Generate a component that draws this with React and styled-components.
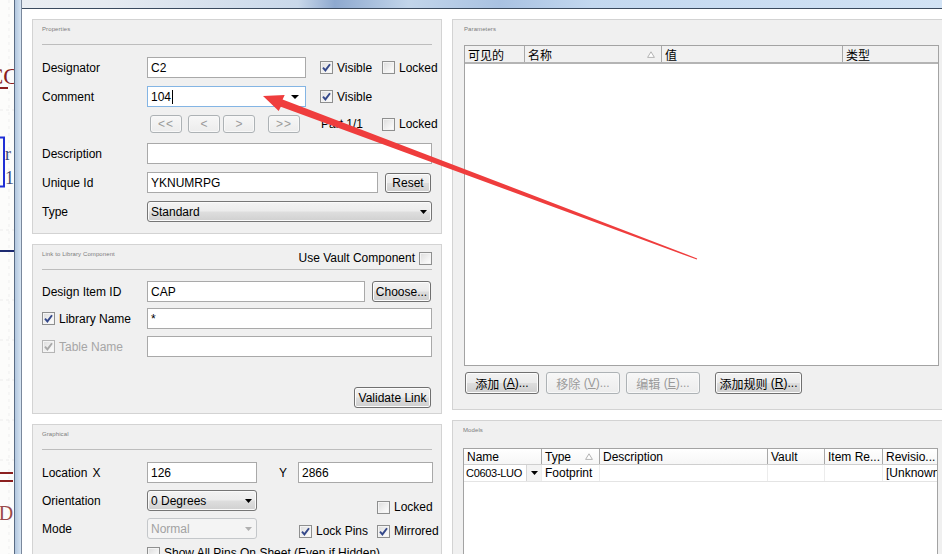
import React from "react";
import styled, { createGlobalStyle } from "styled-components";

const FONT = `"Liberation Sans", Arial, "Noto Sans CJK SC", sans-serif`;

const Global = createGlobalStyle`
  html, body { margin: 0; padding: 0; background: #fff; overflow: hidden; }
  body { font-family: ${FONT}; font-size: 12px; color: #000; }
  * { box-sizing: border-box; }
`;

const Screen = styled.div`
  position: relative;
  width: 942px;
  height: 554px;
  overflow: hidden;
  display: flex;
  background: #fff;
`;

const SchematicStrip = styled.div`
  flex: none;
  width: 14px;
  height: 100%;
  background: #fcfcfb;
`;

const FrameEdge = styled.div`
  flex: none;
  width: 8px;
  height: 100%;
  border-left: 1px solid #5a6c84;
  border-right: 1px solid #7a889c;
  background: linear-gradient(to right, #b2c7df, #d6e4f2);
`;

const WindowArea = styled.div`
  flex: 1;
  min-width: 0;
  display: flex;
  flex-direction: column;
`;

const TitleGlass = styled.div`
  flex: none;
  height: 9px;
  border-bottom: 1px solid #3a4a5e;
  background: linear-gradient(
    to right,
    #e9edf2 0%,
    #e6ebf1 9%,
    #c9d8ea 30%,
    #8ea9cf 34%,
    #c2d5ea 42%,
    #a9c2e2 52%,
    #c3d8ef 62%,
    #d2e3f5 100%
  );
`;

const ClientArea = styled.div`
  flex: 1;
  min-height: 0;
  display: flex;
  gap: 10px;
  padding: 10px 0 0 10px;
  background: #fff;
`;

const Column = styled.div`
  flex: none;
  width: ${(p) => p.$w}px;
  display: flex;
  flex-direction: column;
  gap: 10px;
`;

const GroupPanel = styled.section`
  flex: none;
  height: ${(p) => p.$h}px;
  border: 1px solid #d3d3d3;
  background: #f0f0f0;
  padding: 0 ${(p) => p.$pr ?? 9}px 0 ${(p) => p.$pl ?? 9}px;
  overflow: hidden;
`;

const PanelHead = styled.div`
  height: 25px;
  display: flex;
  justify-content: space-between;
  align-items: flex-start;
  padding-top: 6px;
  border-bottom: 1px solid ${(p) => (p.$rule ? "#bdbdbd" : "transparent")};
`;

const PanelTitle = styled.span`
  font-size: 6px;
  line-height: 7px;
  color: #7c7c7c;
  letter-spacing: 0.1px;
`;

const FormRow = styled.div`
  display: flex;
  align-items: center;
  height: ${(p) => p.$h ?? 21}px;
  margin-top: ${(p) => p.$mt ?? 8}px;
  justify-content: ${(p) => (p.$end ? "flex-end" : "flex-start")};
  padding-right: ${(p) => p.$pr ?? 0}px;
`;

const FieldLabel = styled.div`
  flex: none;
  width: ${(p) => p.$w ?? 105}px;
  display: flex;
  align-items: center;
  gap: 4px;
  white-space: nowrap;
  color: ${(p) => (p.$dim ? "#a6a6a6" : "#000")};
`;

const AxisTag = styled.span`
  margin-left: 1px;
`;

const TextField = styled.div`
  flex: none;
  width: ${(p) => p.$w}px;
  height: 21px;
  border: 1px solid ${(p) => (p.$focus ? "#84b5e4" : "#a9a9a9")};
  background: #fff;
  padding: 0 3px;
  display: flex;
  align-items: center;
  white-space: nowrap;
  overflow: hidden;
`;

const Caret = styled.span`
  display: inline-block;
  width: 1px;
  height: 14px;
  background: #000;
  margin-left: 1px;
`;

const ArrowSlot = styled.span`
  margin-left: auto;
  display: flex;
  align-items: center;
  padding-right: ${(p) => p.$pr ?? 3}px;
`;

const DropList = styled.div`
  flex: none;
  width: ${(p) => p.$w}px;
  height: 21px;
  border: 1px solid ${(p) => (p.$off ? "#c4c7ca" : "#767676")};
  border-radius: 3px;
  background: ${(p) =>
    p.$off
      ? "#f4f4f4"
      : "linear-gradient(#f3f3f3 0%, #ececec 48%, #dedede 52%, #d0d0d0 100%)"};
  box-shadow: inset 0 0 0 1px ${(p) => (p.$off ? "#f4f4f4" : "#fafafa")};
  color: ${(p) => (p.$off ? "#a2a2a2" : "#000")};
  display: flex;
  align-items: center;
  padding: 0 0 0 3px;
  white-space: nowrap;
`;

const PushButton = styled.button`
  flex: none;
  width: ${(p) => p.$w}px;
  height: ${(p) => p.$h ?? 21}px;
  margin-left: ${(p) => p.$ml ?? 0}px;
  margin-right: ${(p) => p.$mr ?? 0}px;
  padding: 0;
  font-family: ${FONT};
  font-size: 12px;
  border: 1px solid ${(p) => (p.disabled ? "#adb2b5" : "#707070")};
  border-radius: 3px;
  background: ${(p) =>
    p.disabled
      ? "linear-gradient(#f7f7f7, #ececec)"
      : "linear-gradient(#f2f2f2 0%, #ebebeb 48%, #dddddd 52%, #cfcfcf 100%)"};
  box-shadow: inset 0 0 0 1px ${(p) => (p.disabled ? "#f8f8f8" : "#fcfcfc")};
  color: ${(p) => (p.disabled ? "#9a9a9a" : "#000")};
  display: flex;
  align-items: center;
  justify-content: center;
  white-space: nowrap;
  letter-spacing: ${(p) => (p.$spaced ? "1px" : "0")};
`;

const Mnemonic = styled.span`
  text-decoration: underline;
`;

const CheckOption = styled.div`
  flex: none;
  display: flex;
  align-items: center;
  gap: 4px;
  margin-left: ${(p) => p.$ml ?? 0}px;
  width: ${(p) => (p.$w ? `${p.$w}px` : "auto")};
  align-self: ${(p) => p.$self ?? "auto"};
  margin-top: ${(p) => p.$mt ?? 0}px;
  white-space: nowrap;
  color: ${(p) => (p.$dim ? "#a6a6a6" : "#000")};
`;

const CheckSquare = styled.span`
  flex: none;
  width: 13px;
  height: 13px;
  border: 1px solid ${(p) => (p.$dim ? "#b5b5b5" : "#8e8f8f")};
  background: linear-gradient(135deg, #dcdcdc 0%, #f2f2f2 60%, #ffffff 100%);
  box-shadow: inset 0 0 0 1px #f4f4f4;
  display: flex;
  align-items: center;
  justify-content: center;
`;

const PartText = styled.span`
  flex: none;
  width: 61px;
  margin-left: 21px;
  white-space: nowrap;
`;

const YTag = styled.span`
  flex: none;
  width: 41px;
  padding-left: 22px;
`;

const Spacer = styled.div`
  flex: none;
  width: ${(p) => p.$w}px;
`;

const GridTable = styled.div`
  width: 475px;
  height: ${(p) => p.$h}px;
  margin-top: ${(p) => p.$mt ?? 0}px;
  margin-left: ${(p) => p.$ml ?? 0}px;
  border: 1px solid #a3a3a3;
  background: #fff;
  overflow: hidden;
`;

const GridHead = styled.div`
  display: grid;
  grid-template-columns: ${(p) => p.$cols};
  height: ${(p) => p.$h}px;
  background: ${(p) => p.$bg};
  border-bottom: ${(p) => p.$bb};
`;

const HeadCell = styled.div`
  display: flex;
  align-items: center;
  padding: 0 6px 0 3px;
  border-left: ${(p) => (p.$first ? "none" : "1px solid #a8a8a8")};
  white-space: nowrap;
  overflow: hidden;
  font-family: ${(p) => (p.$cjk ? `"Noto Sans CJK SC", sans-serif` : FONT)};
  font-size: 12px;
`;

const SortMark = styled.svg`
  margin-left: auto;
  flex: none;
`;

const GridRow = styled.div`
  display: grid;
  grid-template-columns: ${(p) => p.$cols};
  height: 17px;
  border-bottom: 1px solid #e4e4e4;
`;

const BodyCell = styled.div`
  display: flex;
  align-items: center;
  padding-left: ${(p) => p.$pl ?? 3}px;
  border-left: ${(p) => (p.$first ? "none" : "1px solid #ececec")};
  white-space: nowrap;
  overflow: hidden;
`;

const CellText = styled.span`
  font-size: ${(p) => p.$fs ?? 12}px;
  letter-spacing: ${(p) => p.$ls ?? 0}px;
`;

const CellDrop = styled.span`
  margin-left: auto;
  width: 15px;
  height: 16px;
  background: #f3f3f3;
  border-left: 1px solid #d6d6d6;
  display: flex;
  align-items: center;
  justify-content: center;
  flex: none;
`;

const ButtonBar = styled.div`
  display: flex;
  margin-top: 6px;
  margin-left: 1px;
`;

const CJKText = styled.span`
  font-family: "Noto Sans CJK SC", sans-serif;
`;

const ArrowOverlay = styled.svg`
  position: absolute;
  left: 0;
  top: 0;
  width: 942px;
  height: 554px;
  pointer-events: none;
`;

function Check({ on, dim }) {
  return (
    <CheckSquare $dim={dim}>
      {on && (
        <svg width="11" height="11" viewBox="0 0 11 11">
          <path
            d="M2 5.6 L4.4 8.4 L9 2.2"
            fill="none"
            stroke={dim ? "#a9a9a9" : "#34488a"}
            strokeWidth="1.9"
            strokeLinejoin="miter"
          />
        </svg>
      )}
    </CheckSquare>
  );
}

function DownTri({ color = "#000", w = 8, h = 4 }) {
  return (
    <svg width={w} height={h} viewBox={`0 0 ${w} ${h}`}>
      <path d={`M0 0 L${w} 0 L${w / 2} ${h} Z`} fill={color} />
    </svg>
  );
}

function UpTri() {
  return (
    <SortMark width="8" height="7" viewBox="0 0 8 7">
      <path d="M4 0.8 L7.4 6.4 L0.6 6.4 Z" fill="#fff" stroke="#b3b3b3" strokeWidth="1" />
    </SortMark>
  );
}

function Schematic() {
  return (
    <svg width="14" height="554" viewBox="0 0 14 554">
      {[110, 230, 300, 340, 380, 420, 460].map((y) => (
        <line key={y} x1="0" y1={y} x2="14" y2={y} stroke="#ececec" strokeDasharray="3 3" />
      ))}
      <line x1="9" y1="0" x2="9" y2="554" stroke="#efefef" strokeDasharray="3 4" />
      <text x="-12" y="84" fontFamily="Liberation Serif" fontSize="23" fill="#8b1f1f">
        CC
      </text>
      <rect x="0" y="87" width="8" height="2" fill="#8b1f1f" />
      <path d="M0 137.5 H4 V186.5 H0" fill="none" stroke="#1f2fd6" strokeWidth="2" />
      <text x="5" y="160" fontFamily="Liberation Serif" fontSize="18" fill="#3e4a78">
        r
      </text>
      <text x="5" y="184" fontFamily="Liberation Serif" fontSize="18" fill="#3e4a78">
        1
      </text>
      <rect x="0" y="250" width="14" height="2" fill="#1d2a70" />
      <rect x="0" y="472" width="13" height="2" fill="#8b1f1f" />
      <rect x="0" y="480" width="13" height="2" fill="#8b1f1f" />
      <text x="-8" y="520" fontFamily="Liberation Serif" fontSize="20" fill="#9a4a4a">
        ID
      </text>
    </svg>
  );
}

const PARAM_COLS = "59px 137px 181px 1fr";
const MODEL_COLS = "77px 58px 168px 57px 58px 1fr";

export default function App() {
  return (
    <>
      <Global />
      <Screen>
        <SchematicStrip>
          <Schematic />
        </SchematicStrip>
        <FrameEdge />
        <WindowArea>
          <TitleGlass />
          <ClientArea>
            <Column $w={410}>
              <GroupPanel $h={215}>
                <PanelHead $rule>
                  <PanelTitle>Properties</PanelTitle>
                </PanelHead>
                <FormRow $mt={12}>
                  <FieldLabel>Designator</FieldLabel>
                  <TextField $w={159}>C2</TextField>
                  <CheckOption $ml={14} $w={62}>
                    <Check on />
                    Visible
                  </CheckOption>
                  <CheckOption>
                    <Check />
                    Locked
                  </CheckOption>
                </FormRow>
                <FormRow>
                  <FieldLabel>Comment</FieldLabel>
                  <TextField $w={159} $focus>
                    104
                    <Caret />
                    <ArrowSlot $pr={3}>
                      <DownTri />
                    </ArrowSlot>
                  </TextField>
                  <CheckOption $ml={14}>
                    <Check on />
                    Visible
                  </CheckOption>
                </FormRow>
                <FormRow $h={18}>
                  <Spacer $w={108} />
                  <PushButton $w={32} $h={18} disabled $spaced>
                    {"<<"}
                  </PushButton>
                  <PushButton $w={32} $h={18} $ml={6} disabled>
                    {"<"}
                  </PushButton>
                  <PushButton $w={32} $h={18} $ml={3} disabled>
                    {">"}
                  </PushButton>
                  <PushButton $w={32} $h={18} $ml={13} disabled $spaced>
                    {">>"}
                  </PushButton>
                  <PartText>Part 1/1</PartText>
                  <CheckOption>
                    <Check />
                    Locked
                  </CheckOption>
                </FormRow>
                <FormRow $mt={10}>
                  <FieldLabel>Description</FieldLabel>
                  <TextField $w={285} />
                </FormRow>
                <FormRow>
                  <FieldLabel>Unique Id</FieldLabel>
                  <TextField $w={231}>YKNUMRPG</TextField>
                  <PushButton $w={46} $h={20} $ml={7}>
                    Reset
                  </PushButton>
                </FormRow>
                <FormRow>
                  <FieldLabel>Type</FieldLabel>
                  <DropList $w={285}>
                    Standard
                    <ArrowSlot $pr={4}>
                      <DownTri w={7} h={4} />
                    </ArrowSlot>
                  </DropList>
                </FormRow>
              </GroupPanel>

              <GroupPanel $h={170}>
                <PanelHead $rule>
                  <PanelTitle>Link to Library Component</PanelTitle>
                  <CheckOption>
                    Use Vault Component
                    <Check />
                  </CheckOption>
                </PanelHead>
                <FormRow $mt={11}>
                  <FieldLabel>Design Item ID</FieldLabel>
                  <TextField $w={218}>CAP</TextField>
                  <PushButton $w={59} $ml={7}>
                    Choose...
                  </PushButton>
                </FormRow>
                <FormRow $mt={6}>
                  <FieldLabel>
                    <Check on />
                    Library Name
                  </FieldLabel>
                  <TextField $w={285}>*</TextField>
                </FormRow>
                <FormRow $mt={7}>
                  <FieldLabel $dim>
                    <Check on dim />
                    Table Name
                  </FieldLabel>
                  <TextField $w={285} />
                </FormRow>
                <FormRow $mt={30} $end $pr={1}>
                  <PushButton $w={77}>Validate Link</PushButton>
                </FormRow>
              </GroupPanel>

              <GroupPanel $h={200}>
                <PanelHead $rule>
                  <PanelTitle>Graphical</PanelTitle>
                </PanelHead>
                <FormRow $mt={12}>
                  <FieldLabel>
                    Location <AxisTag>X</AxisTag>
                  </FieldLabel>
                  <TextField $w={110}>126</TextField>
                  <YTag>Y</YTag>
                  <TextField $w={135}>2866</TextField>
                </FormRow>
                <FormRow $mt={7}>
                  <FieldLabel>Orientation</FieldLabel>
                  <DropList $w={110}>
                    0 Degrees
                    <ArrowSlot $pr={4}>
                      <DownTri w={7} h={4} />
                    </ArrowSlot>
                  </DropList>
                  <CheckOption $ml={120} $self="flex-start" $mt={10}>
                    <Check />
                    Locked
                  </CheckOption>
                </FormRow>
                <FormRow $mt={7}>
                  <FieldLabel>Mode</FieldLabel>
                  <DropList $w={110} $off>
                    Normal
                    <ArrowSlot $pr={4}>
                      <DownTri w={7} h={4} color="#b0b0b0" />
                    </ArrowSlot>
                  </DropList>
                  <CheckOption $ml={42} $w={78} $self="flex-start" $mt={6}>
                    <Check on />
                    Lock Pins
                  </CheckOption>
                  <CheckOption $self="flex-start" $mt={6}>
                    <Check on />
                    Mirrored
                  </CheckOption>
                </FormRow>
                <FormRow $mt={7} $h={14}>
                  <Spacer $w={105} />
                  <CheckOption>
                    <Check />
                    Show All Pins On Sheet (Even if Hidden)
                  </CheckOption>
                </FormRow>
              </GroupPanel>
            </Column>

            <Column $w={500}>
              <GroupPanel $h={391} $pl={11} $pr={0}>
                <PanelHead>
                  <PanelTitle>Parameters</PanelTitle>
                </PanelHead>
                <GridTable $h={321}>
                  <GridHead $cols={PARAM_COLS} $h={18} $bg="#f1f1f1" $bb="2px solid #b4b4b4">
                    <HeadCell $first $cjk>可见的</HeadCell>
                    <HeadCell $cjk>
                      名称
                      <UpTri />
                    </HeadCell>
                    <HeadCell $cjk>值</HeadCell>
                    <HeadCell $cjk>类型</HeadCell>
                  </GridHead>
                </GridTable>
                <ButtonBar>
                  <PushButton $w={74} $h={22}>
                    <CJKText>添加</CJKText>&nbsp;(<Mnemonic>A</Mnemonic>)...
                  </PushButton>
                  <PushButton $w={74} $h={22} $ml={7} disabled>
                    <CJKText>移除</CJKText>&nbsp;(<Mnemonic>V</Mnemonic>)...
                  </PushButton>
                  <PushButton $w={74} $h={22} $ml={6} disabled>
                    <CJKText>编辑</CJKText>&nbsp;(<Mnemonic>E</Mnemonic>)...
                  </PushButton>
                  <PushButton $w={87} $h={22} $ml={15}>
                    <CJKText>添加规则</CJKText>&nbsp;(<Mnemonic>R</Mnemonic>)...
                  </PushButton>
                </ButtonBar>
              </GroupPanel>

              <GroupPanel $h={200} $pl={10} $pr={0}>
                <PanelHead>
                  <PanelTitle>Models</PanelTitle>
                </PanelHead>
                <GridTable $h={160} $mt={2}>
                  <GridHead
                    $cols={MODEL_COLS}
                    $h={16}
                    $bg="linear-gradient(#ffffff, #f6f6f6)"
                    $bb="1px solid #cfcfcf"
                  >
                    <HeadCell $first>Name</HeadCell>
                    <HeadCell>
                      Type
                      <UpTri />
                    </HeadCell>
                    <HeadCell>Description</HeadCell>
                    <HeadCell>Vault</HeadCell>
                    <HeadCell>Item Re...</HeadCell>
                    <HeadCell>Revisio...</HeadCell>
                  </GridHead>
                  <GridRow $cols={MODEL_COLS}>
                    <BodyCell $first $pl={2}>
                      <CellText $fs={11} $ls={-0.3}>C0603-LUO</CellText>
                      <CellDrop>
                        <DownTri w={7} h={4} />
                      </CellDrop>
                    </BodyCell>
                    <BodyCell>Footprint</BodyCell>
                    <BodyCell />
                    <BodyCell />
                    <BodyCell />
                    <BodyCell>[Unknown]</BodyCell>
                  </GridRow>
                </GridTable>
              </GroupPanel>
            </Column>
          </ClientArea>
        </WindowArea>

        <ArrowOverlay viewBox="0 0 942 554">
          <polygon
            points="263,96 284.7,95.1 282.6,99.4 697.2,258.4 696.8,259.6 280.8,106.8 278.7,111"
            fill="#ef3d3d"
          />
        </ArrowOverlay>
      </Screen>
    </>
  );
}
